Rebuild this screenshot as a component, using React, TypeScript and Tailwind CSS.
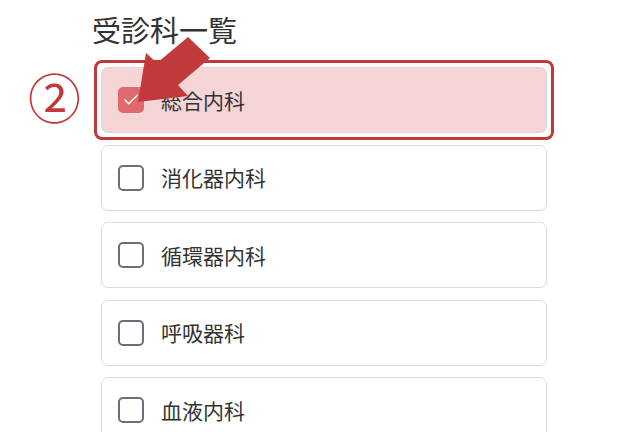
import { Check } from 'lucide-react'

type Dept = {
  id: number
  name: string
  checked: boolean
}

const DEPTS: Dept[] = [
  { id: 1, name: '総合内科', checked: true },
  { id: 2, name: '消化器内科', checked: false },
  { id: 3, name: '循環器内科', checked: false },
  { id: 4, name: '呼吸器科', checked: false },
  { id: 5, name: '血液内科', checked: false },
]

const FONT = "font-['Noto_Sans_CJK_JP','Noto_Sans',sans-serif]"

function DeptRow({ dept }: { dept: Dept }) {
  return (
    <div
      className={`relative flex h-[66px] shrink-0 items-center gap-[17px] rounded-[7px] border border-[#d8dae0] pl-4 ${
        dept.checked ? 'bg-[#f5d5d6]' : 'bg-white'
      }`}
    >
      {dept.checked ? (
        <span className="flex h-[26px] w-[26px] items-center justify-center rounded-[5px] bg-[#e0696d]">
          <Check className="h-[18px] w-[18px] text-white" strokeWidth={2} />
        </span>
      ) : (
        <span className="h-[26px] w-[26px] rounded-[5px] border-2 border-[#6b6f7a] bg-white" />
      )}
      <span className="text-[21px] leading-none text-[#333333]">{dept.name}</span>
      {dept.checked && (
        <span className="pointer-events-none absolute -inset-[8px] rounded-[8px] border-[3px] border-[#c0393b]" />
      )}
    </div>
  )
}

export default function App() {
  return (
    <div className={`relative h-[432px] w-[628px] overflow-hidden bg-white ${FONT}`}>
      <div className="flex flex-col pl-[92px] pt-[9px]">
        <h1 className="text-[29px] font-normal leading-[40px] text-[#333333]">受診科一覧</h1>
        <div className="mt-[18px] flex w-[455px] flex-col gap-[11.5px] pl-[9px]">
          {DEPTS.map((d) => (
            <DeptRow key={d.id} dept={d} />
          ))}
        </div>
      </div>

      {/* step marker */}
      <span className="absolute left-[28px] top-[64px] flex h-[64px] items-center text-[53px] leading-none text-[#c0393b]">
        ②
      </span>

      {/* pointer arrow */}
      <svg className="pointer-events-none absolute left-[130px] top-[30px]" width="90" height="80" viewBox="0 0 90 80">
        <polygon points="8,72 16,23 27,33 58,7 80,28 48,55 58,66" fill="#c13a3c" />
      </svg>
    </div>
  )
}
